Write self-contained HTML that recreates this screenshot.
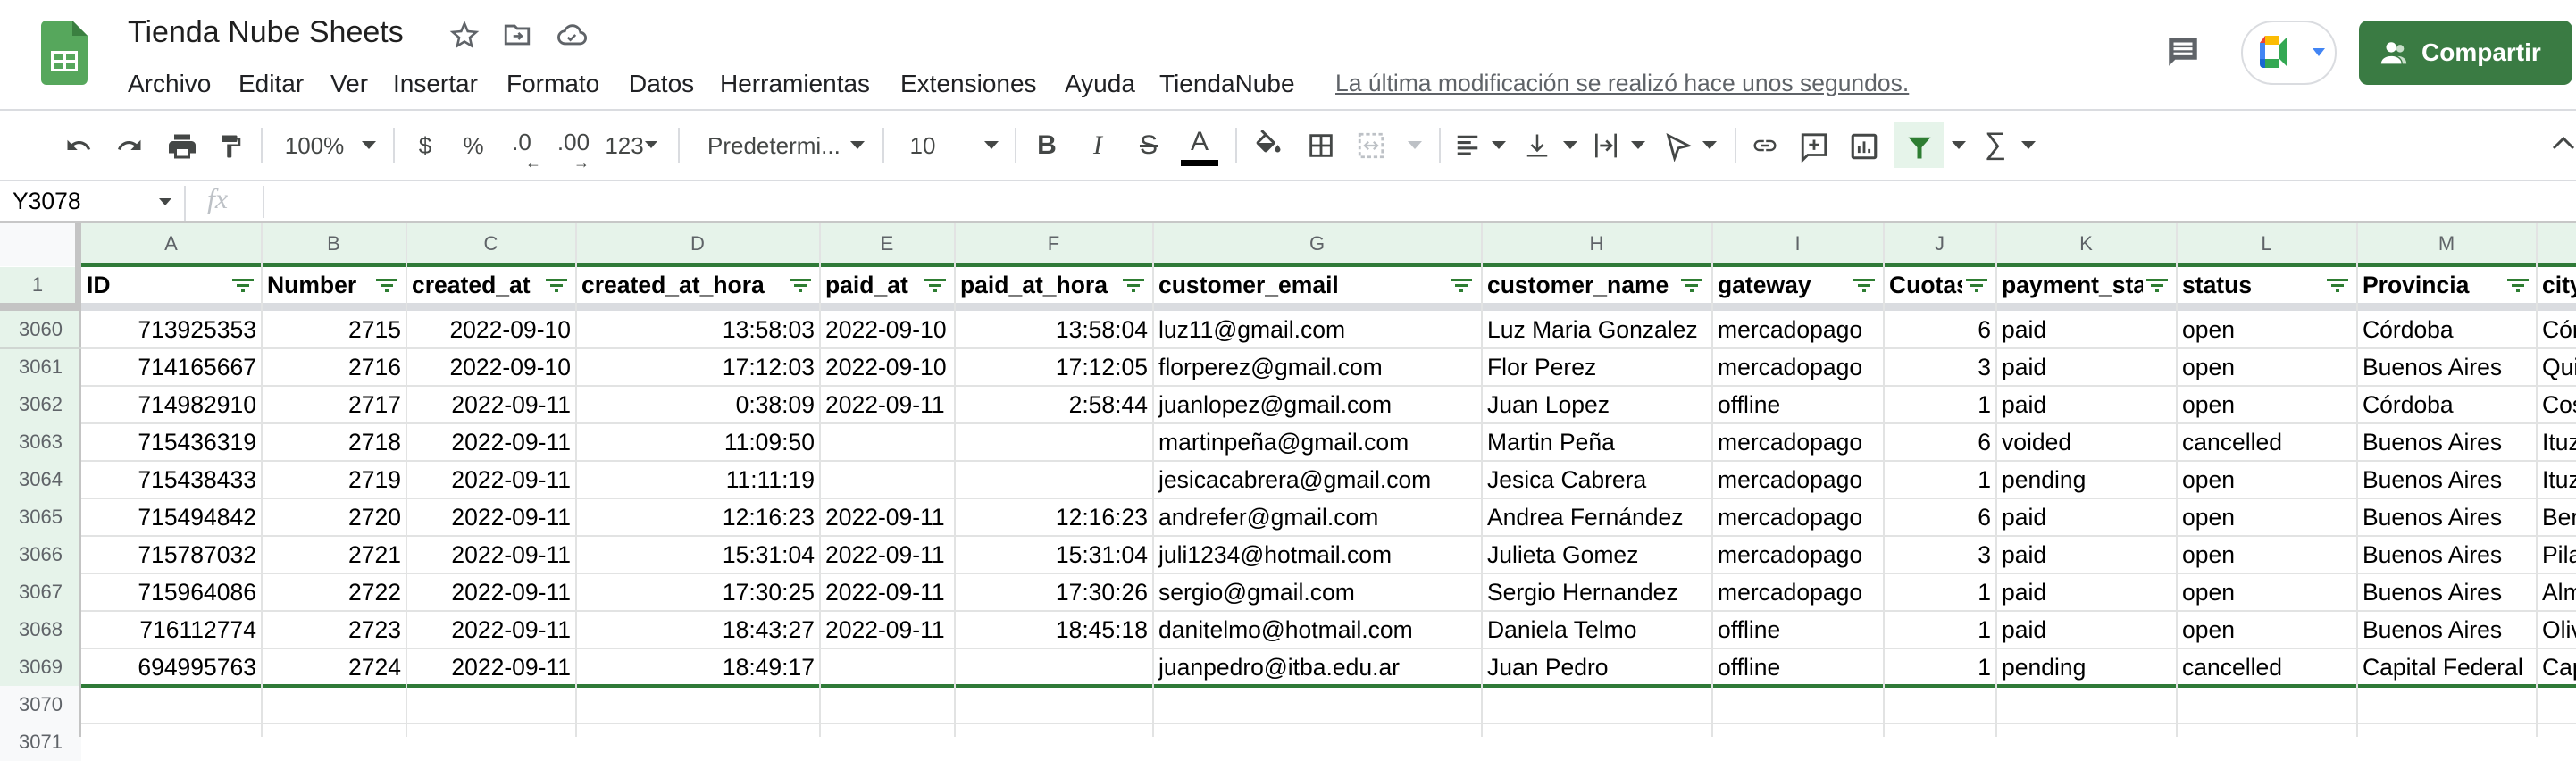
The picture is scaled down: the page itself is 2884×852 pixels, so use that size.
<!DOCTYPE html>
<html><head><meta charset="utf-8">
<style>
*{margin:0;padding:0;box-sizing:border-box}
body{width:2884px;height:825px;overflow:hidden;background:#fff;font-family:"Liberation Sans",Arial,sans-serif;position:relative;color:#000}
.a{position:absolute;white-space:nowrap}
.menu{top:78px;font-size:28px;color:#202124}
.tb{position:absolute;top:140px;height:46px;display:flex;align-items:center;justify-content:center;color:#444746;font-size:26px}
.sep{position:absolute;top:143px;width:2px;height:40px;background:#dadce0}
.cell{position:absolute;height:42px;line-height:42px;font-size:26.5px;overflow:hidden;white-space:nowrap;padding:0 6px}
.r{text-align:right}
.hd{font-weight:bold}
.rn{position:absolute;left:0;width:91px;text-align:center;font-size:22px;color:#5f6368;height:42px;line-height:42px;background:#e6f3ea}
.ch{position:absolute;top:250px;height:46px;line-height:46px;text-align:center;font-size:22px;color:#5f6368}
.vl{position:absolute;width:2px;background:#e2e3e3}
.hl{position:absolute;left:91px;width:2793px;height:2px;background:#e2e3e3}
.flt{position:absolute;width:24px;height:16px}
</style></head><body>

<svg class="a" style="left:46px;top:23px" width="52" height="72" viewBox="0 0 52 72">
<path d="M0 6a6 6 0 0 1 6-6h29l17 17v49a6 6 0 0 1-6 6H6a6 6 0 0 1-6-6z" fill="#56a75c"/>
<path d="M35 0l17 17H35z" fill="#3a7f40"/>
<rect x="11" y="34" width="30" height="22" fill="#fff"/>
<rect x="14" y="37" width="10" height="7" fill="#56a75c"/><rect x="28" y="37" width="10" height="7" fill="#56a75c"/>
<rect x="14" y="47" width="10" height="7" fill="#56a75c"/><rect x="28" y="47" width="10" height="7" fill="#56a75c"/>
</svg>
<div class="a" style="left:143px;top:17px;font-size:34px;color:#1f1f1f">Tienda Nube Sheets</div>
<svg class="a" style="left:503px;top:22px" width="34" height="34" viewBox="0 0 24 24"><path d="M12 3l2.6 6.2 6.7.6-5.1 4.4 1.5 6.6L12 17.3 6.3 20.8l1.5-6.6L2.7 9.8l6.7-.6z" fill="none" stroke="#5f6368" stroke-width="1.8"/></svg>
<svg class="a" style="left:562px;top:22px" width="34" height="34" viewBox="0 0 24 24"><path d="M3 5h7l2 2h9v12H3z" fill="none" stroke="#5f6368" stroke-width="2"/><path d="M9 13h6m-2-2.5L15.5 13 13 15.5" fill="none" stroke="#5f6368" stroke-width="1.8"/></svg>
<svg class="a" style="left:622px;top:22px" width="36" height="34" viewBox="0 0 24 24"><path d="M7 19a5 5 0 0 1-.5-10A6.5 6.5 0 0 1 19 10a4.5 4.5 0 0 1-1 9z" fill="none" stroke="#5f6368" stroke-width="2"/><path d="M9 14l2 2 4-4" fill="none" stroke="#5f6368" stroke-width="1.8"/></svg>

<div class="a menu" style="left:143px">Archivo</div>
<div class="a menu" style="left:267px">Editar</div>
<div class="a menu" style="left:370px">Ver</div>
<div class="a menu" style="left:440px">Insertar</div>
<div class="a menu" style="left:567px">Formato</div>
<div class="a menu" style="left:704px">Datos</div>
<div class="a menu" style="left:806px">Herramientas</div>
<div class="a menu" style="left:1008px">Extensiones</div>
<div class="a menu" style="left:1192px">Ayuda</div>
<div class="a menu" style="left:1298px">TiendaNube</div>
<div class="a" style="left:1495px;top:78px;font-size:26.5px;color:#5f6368;text-decoration:underline">La última modificación se realizó hace unos segundos.</div>

<svg class="a" style="left:2423px;top:36px" width="42" height="44" viewBox="0 0 24 24"><path d="M3 3h18v14H7l-4 4z" fill="#5f6368"/><rect x="6" y="6" width="12" height="1.8" fill="#fff"/><rect x="6" y="9.2" width="12" height="1.8" fill="#fff"/><rect x="6" y="12.4" width="12" height="1.8" fill="#fff"/></svg>
<div class="a" style="left:2509px;top:23px;width:107px;height:72px;border:2px solid #dadce0;border-radius:36px"></div>
<svg class="a" style="left:2528px;top:38px" width="40" height="40" viewBox="0 0 40 40">
<path d="M8 2h16v10H8z" fill="#fbbc04"/><path d="M2 10l6-8v10H2z" fill="#ea4335"/>
<path d="M2 10h6v18H2z" fill="#4285f4"/><path d="M2 28h6v10H6a4 4 0 0 1-4-4z" fill="#1967d2"/>
<path d="M8 28h16v10H8z" fill="#34a853"/><path d="M24 12v16l8 8V4z" fill="#34a853"/>
<rect x="8" y="12" width="16" height="16" fill="#fff"/></svg>
<svg class="a" style="left:2589px;top:54px" width="14" height="10" viewBox="0 0 14 10"><path d="M0 0h14L7 9z" fill="#4285f4"/></svg>
<div class="a" style="left:2641px;top:23px;width:239px;height:72px;background:#3a7b43;border-radius:10px;color:#fff;font-size:28px;line-height:72px;padding-left:70px;font-weight:bold">Compartir</div>
<svg class="a" style="left:2663px;top:43px" width="34" height="34" viewBox="0 0 24 24"><circle cx="10" cy="7" r="4" fill="#fff"/><path d="M2 20c0-4 4-6 8-6s8 2 8 6z" fill="#fff"/><circle cx="17" cy="8" r="3" fill="#c9dfcb"/><path d="M15 14c4 0 7 2 7 6h-3c0-3-2-5-4-6z" fill="#c9dfcb"/></svg>

<div class="a" style="left:0;top:122px;width:2884px;height:2px;background:#dadce0"></div>
<div class="a" style="left:0;top:201px;width:2884px;height:2px;background:#dadce0"></div>
<svg class="a" style="left:70px;top:148px" width="36" height="30" viewBox="0 0 24 24"><path d="M12.5 8c-2.6 0-5 1-6.9 2.6L2 7v9h9l-3.6-3.6c1.4-1.2 3.2-1.9 5.1-1.900 3.5 0 6.5 2.3 7.6 5.5l2.4-.8C21 11 17.1 8 12.5 8z" fill="#444746"/></svg>
<svg class="a" style="left:127px;top:148px" width="36" height="30" viewBox="0 0 24 24"><path d="M18.4 10.6C16.6 9 14.1 8 11.5 8 6.9 8 3 11 1.6 15.2l2.4.8C5 12.8 8 10.5 11.5 10.5c1.9 0 3.7.7 5.1 1.9L13 16h9V7z" fill="#444746"/></svg>
<svg class="a" style="left:186px;top:144px" width="36" height="40" viewBox="0 0 24 24"><path d="M19 8H5a3 3 0 0 0-3 3v6h4v4h12v-4h4v-6a3 3 0 0 0-3-3zm-3 11H8v-5h8zM18 3H6v4h12z" fill="#444746"/></svg>
<svg class="a" style="left:243px;top:144px" width="30" height="40" viewBox="0 0 24 24"><path d="M18 4V3a1 1 0 0 0-1-1H5a1 1 0 0 0-1 1v4a1 1 0 0 0 1 1h12a1 1 0 0 0 1-1V6h1v4H9v11a1 1 0 0 0 1 1h2a1 1 0 0 0 1-1v-9h8V4z" fill="#444746"/></svg>
<div class="sep" style="left:292px"></div>
<div class="tb" style="left:322px;width:60px">100%</div>
<svg class="a" style="left:405px;top:158px" width="16" height="10"><path d="M0 0h16L8 9z" fill="#444746"/></svg>
<div class="sep" style="left:440px"></div>
<div class="tb" style="left:466px;width:20px">$</div>
<div class="tb" style="left:518px;width:24px">%</div>
<div class="tb" style="left:572px;width:24px;top:136px">.0</div>
<div class="a" style="left:588px;top:172px;font-size:18px;color:#444746">←</div>
<div class="tb" style="left:624px;width:36px;top:136px">.00</div>
<div class="a" style="left:642px;top:172px;font-size:18px;color:#444746">→</div>
<div class="tb" style="left:678px;width:42px">123</div>
<svg class="a" style="left:722px;top:158px" width="14" height="10"><path d="M0 0h14L7 8z" fill="#444746"/></svg>
<div class="sep" style="left:759px"></div>
<div class="tb" style="left:792px;width:142px;justify-content:flex-start">Predetermi...</div>
<svg class="a" style="left:952px;top:158px" width="16" height="10"><path d="M0 0h16L8 9z" fill="#444746"/></svg>
<div class="sep" style="left:988px"></div>
<div class="tb" style="left:1018px;width:30px">10</div>
<svg class="a" style="left:1102px;top:158px" width="16" height="10"><path d="M0 0h16L8 9z" fill="#444746"/></svg>
<div class="sep" style="left:1136px"></div>
<div class="tb" style="left:1160px;width:24px;font-weight:bold;font-size:30px">B</div>
<div class="tb" style="left:1217px;width:24px;font-style:italic;font-size:30px;font-family:'Liberation Serif',serif">I</div>
<div class="tb" style="left:1273px;width:26px;text-decoration:line-through;font-size:30px">S</div>
<div class="tb" style="left:1329px;width:28px;font-size:30px;top:136px">A</div>
<div class="a" style="left:1322px;top:179px;width:42px;height:7px;background:#000"></div>
<div class="sep" style="left:1383px"></div>
<svg class="a" style="left:1402px;top:145px" width="36" height="36" viewBox="0 0 24 24"><path d="M16.6 8.9L7.6 0 6.2 1.4l2.4 2.4-5.1 5.1a1.5 1.5 0 0 0 0 2.1l5.5 5.5a1.5 1.5 0 0 0 2.1 0l5.5-5.5a1.5 1.5 0 0 0 0-2.1zM5.2 10L10 5.2 14.8 10zM19 11.5s-2 2.2-2 3.5a2 2 0 0 0 4 0c0-1.3-2-3.5-2-3.5z" fill="#444746"/></svg>
<svg class="a" style="left:1462px;top:145px" width="34" height="36" viewBox="0 0 24 24"><path d="M3 3v18h18V3zm8 16H5v-6h6zm0-8H5V5h6zm8 8h-6v-6h6zm0-8h-6V5h6z" fill="#444746"/></svg>
<svg class="a" style="left:1518px;top:145px" width="34" height="36" viewBox="0 0 24 24"><path d="M3 3h18v18H3z" fill="none" stroke="#bdc1c6" stroke-width="2" stroke-dasharray="3 2"/><path d="M8 12h8M10 9l-3 3 3 3M14 9l3 3-3 3" fill="none" stroke="#bdc1c6" stroke-width="1.6"/></svg>
<svg class="a" style="left:1576px;top:158px" width="16" height="10"><path d="M0 0h16L8 9z" fill="#bdc1c6"/></svg>
<div class="sep" style="left:1611px"></div>
<svg class="a" style="left:1628px;top:145px" width="30" height="36" viewBox="0 0 24 24"><path d="M3 3h18v2.5H3zm0 5h12v2.5H3zm0 5h18v2.5H3zm0 5h12v2.5H3z" fill="#444746"/></svg>
<svg class="a" style="left:1670px;top:158px" width="16" height="10"><path d="M0 0h16L8 9z" fill="#444746"/></svg>
<svg class="a" style="left:1706px;top:145px" width="30" height="36" viewBox="0 0 24 24"><path d="M11 2h2v12l3.5-3.5 1.4 1.4L12 17.8 6.1 11.9l1.4-1.4L11 14zM3 20h18v2H3z" fill="#444746"/></svg>
<svg class="a" style="left:1750px;top:158px" width="16" height="10"><path d="M0 0h16L8 9z" fill="#444746"/></svg>
<svg class="a" style="left:1782px;top:145px" width="32" height="36" viewBox="0 0 24 24"><path d="M3 2h2v20H3zm16 0h2v20h-2zM7 11h7l-2.5-2.5 1.4-1.4L18 12l-5.1 4.9-1.4-1.4L14 13H7z" fill="#444746"/></svg>
<svg class="a" style="left:1826px;top:158px" width="16" height="10"><path d="M0 0h16L8 9z" fill="#444746"/></svg>
<svg class="a" style="left:1862px;top:145px" width="34" height="36" viewBox="0 0 24 24"><path d="M4 4l16 8-8 2-3 8z" fill="none" stroke="#444746" stroke-width="2"/></svg>
<svg class="a" style="left:1906px;top:158px" width="16" height="10"><path d="M0 0h16L8 9z" fill="#444746"/></svg>
<div class="sep" style="left:1942px"></div>
<svg class="a" style="left:1958px;top:148px" width="36" height="30" viewBox="0 0 24 24"><path d="M3.9 12A3.1 3.1 0 0 1 7 8.9h4V7H7a5 5 0 0 0 0 10h4v-1.9H7A3.1 3.1 0 0 1 3.9 12zM8 13h8v-2H8zm9-6h-4v1.9h4a3.1 3.1 0 0 1 0 6.2h-4V17h4a5 5 0 0 0 0-10z" fill="#444746"/></svg>
<svg class="a" style="left:2014px;top:145px" width="34" height="40" viewBox="0 0 24 24"><path d="M3 2h18v16H7l-4 4z" fill="none" stroke="#444746" stroke-width="2"/><path d="M12 6v8M8 10h8" stroke="#444746" stroke-width="2"/></svg>
<svg class="a" style="left:2070px;top:145px" width="34" height="38" viewBox="0 0 24 24"><rect x="3" y="3" width="18" height="18" rx="1" fill="none" stroke="#444746" stroke-width="2.2"/><path d="M8 17v-5m4 5V8m4 9v-3" stroke="#444746" stroke-width="2"/></svg>
<div class="a" style="left:2121px;top:137px;width:55px;height:51px;background:#e6f4ea"></div>
<svg class="a" style="left:2134px;top:148px" width="30" height="34" viewBox="0 0 24 24"><path d="M2 3h20l-8 9v10h-4V12z" fill="#2e7d32"/></svg>
<svg class="a" style="left:2185px;top:158px" width="16" height="10"><path d="M0 0h16L8 9z" fill="#444746"/></svg>
<div class="tb" style="left:2222px;width:24px;font-size:34px;top:138px">∑</div>
<svg class="a" style="left:2263px;top:158px" width="16" height="10"><path d="M0 0h16L8 9z" fill="#444746"/></svg>
<svg class="a" style="left:2856px;top:150px" width="28" height="20" viewBox="0 0 28 20"><path d="M3 16L14 5l11 11" fill="none" stroke="#444746" stroke-width="3"/></svg>

<div class="a" style="left:14px;top:208px;font-size:26.5px;line-height:34px">Y3078</div>
<svg class="a" style="left:178px;top:222px" width="14" height="9"><path d="M0 0h14L7 8z" fill="#444746"/></svg>
<div class="a" style="left:206px;top:208px;width:2px;height:40px;background:#dadce0"></div>
<div class="a" style="left:232px;top:204px;font-size:32px;color:#bdc1c6;font-style:italic;font-family:'Liberation Serif',serif">fx</div>
<div class="a" style="left:294px;top:208px;width:2px;height:36px;background:#dadce0"></div>
<div class="a" style="left:0;top:247px;width:2884px;height:3px;background:#c7c7c7"></div>

<div class="a" style="left:0;top:250px;width:91px;height:48px;background:#f8f9fa"></div>
<div class="a" style="left:91px;top:250px;width:2793px;height:46px;background:#e6f3ea"></div>
<div class="a" style="left:84px;top:250px;width:7px;height:98px;background:#c4c4c4"></div>
<div class="a" style="left:0;top:339px;width:2884px;height:9px;background:#dadce0"></div>
<div class="a" style="left:0;top:339px;width:91px;height:9px;background:#c4c4c4"></div>
<div class="a" style="left:91px;top:295px;width:2793px;height:4px;background:#2f7a38"></div>

<div class="rn" style="top:299px;height:40px;line-height:40px;width:84px">1</div>
<div class="rn" style="top:348px">3060</div>
<div class="rn" style="top:390px">3061</div>
<div class="rn" style="top:432px">3062</div>
<div class="rn" style="top:474px">3063</div>
<div class="rn" style="top:516px">3064</div>
<div class="rn" style="top:558px">3065</div>
<div class="rn" style="top:600px">3066</div>
<div class="rn" style="top:642px">3067</div>
<div class="rn" style="top:684px">3068</div>
<div class="rn" style="top:726px">3069</div>
<div class="rn" style="top:768px;background:#f8f9fa">3070</div>
<div class="rn" style="top:810px;background:#f8f9fa">3071</div>
<div class="a" style="left:89px;top:348px;width:2px;height:477px;background:#c4c4c4"></div>

<div class="hl" style="top:389px"></div><div class="hl" style="top:431px"></div><div class="hl" style="top:473px"></div>
<div class="hl" style="top:515px"></div><div class="hl" style="top:557px"></div><div class="hl" style="top:599px"></div>
<div class="hl" style="top:641px"></div><div class="hl" style="top:683px"></div><div class="hl" style="top:725px"></div>
<div class="hl" style="top:809px"></div>
<div class="a" style="left:0;top:389px;width:91px;height:2px;background:#d0d6d2"></div>
<div class="a" style="left:91px;top:766px;width:2793px;height:4px;background:#2f7a38"></div>

<div class="vl" style="left:292px;top:250px;height:575px"></div>
<div class="vl" style="left:454px;top:250px;height:575px"></div>
<div class="vl" style="left:644px;top:250px;height:575px"></div>
<div class="vl" style="left:917px;top:250px;height:575px"></div>
<div class="vl" style="left:1068px;top:250px;height:575px"></div>
<div class="vl" style="left:1290px;top:250px;height:575px"></div>
<div class="vl" style="left:1658px;top:250px;height:575px"></div>
<div class="vl" style="left:1916px;top:250px;height:575px"></div>
<div class="vl" style="left:2108px;top:250px;height:575px"></div>
<div class="vl" style="left:2234px;top:250px;height:575px"></div>
<div class="vl" style="left:2436px;top:250px;height:575px"></div>
<div class="vl" style="left:2638px;top:250px;height:575px"></div>
<div class="vl" style="left:2839px;top:250px;height:575px"></div>

<div class="ch" style="left:91px;width:201px">A</div>
<div class="ch" style="left:293px;width:161px">B</div>
<div class="ch" style="left:455px;width:189px">C</div>
<div class="ch" style="left:645px;width:272px">D</div>
<div class="ch" style="left:918px;width:150px">E</div>
<div class="ch" style="left:1069px;width:221px">F</div>
<div class="ch" style="left:1291px;width:367px">G</div>
<div class="ch" style="left:1659px;width:257px">H</div>
<div class="ch" style="left:1917px;width:191px">I</div>
<div class="ch" style="left:2109px;width:125px">J</div>
<div class="ch" style="left:2235px;width:201px">K</div>
<div class="ch" style="left:2437px;width:201px">L</div>
<div class="ch" style="left:2639px;width:200px">M</div>

<div class="cell hd" style="left:91px;top:299px;width:170px;height:40px;line-height:40px">ID</div>
<div class="cell hd" style="left:293px;top:299px;width:130px;height:40px;line-height:40px">Number</div>
<div class="cell hd" style="left:455px;top:299px;width:160px;height:40px;line-height:40px">created_at</div>
<div class="cell hd" style="left:645px;top:299px;width:240px;height:40px;line-height:40px">created_at_hora</div>
<div class="cell hd" style="left:918px;top:299px;width:120px;height:40px;line-height:40px">paid_at</div>
<div class="cell hd" style="left:1069px;top:299px;width:190px;height:40px;line-height:40px">paid_at_hora</div>
<div class="cell hd" style="left:1291px;top:299px;width:330px;height:40px;line-height:40px">customer_email</div>
<div class="cell hd" style="left:1659px;top:299px;width:225px;height:40px;line-height:40px">customer_name</div>
<div class="cell hd" style="left:1917px;top:299px;width:160px;height:40px;line-height:40px">gateway</div>
<div class="cell hd" style="left:2109px;top:299px;width:88px;height:40px;line-height:40px">Cuotas</div>
<div class="cell hd" style="left:2235px;top:299px;width:164px;height:40px;line-height:40px">payment_status</div>
<div class="cell hd" style="left:2437px;top:299px;width:170px;height:40px;line-height:40px">status</div>
<div class="cell hd" style="left:2639px;top:299px;width:170px;height:40px;line-height:40px">Provincia</div>
<div class="cell hd" style="left:2840px;top:299px;width:60px;height:40px;line-height:40px">city</div>

<svg width="0" height="0" style="position:absolute"><defs><g id="f"><rect x="0" y="0" width="24" height="3" fill="#2e7d32"/><rect x="5" y="6" width="14" height="3" fill="#2e7d32"/><rect x="10" y="12" width="4" height="3" fill="#2e7d32"/></g></defs></svg>
<svg class="flt" style="left:260px;top:312px"><use href="#f"/></svg>
<svg class="flt" style="left:421px;top:312px"><use href="#f"/></svg>
<svg class="flt" style="left:611px;top:312px"><use href="#f"/></svg>
<svg class="flt" style="left:884px;top:312px"><use href="#f"/></svg>
<svg class="flt" style="left:1035px;top:312px"><use href="#f"/></svg>
<svg class="flt" style="left:1257px;top:312px"><use href="#f"/></svg>
<svg class="flt" style="left:1624px;top:312px"><use href="#f"/></svg>
<svg class="flt" style="left:1882px;top:312px"><use href="#f"/></svg>
<svg class="flt" style="left:2075px;top:312px"><use href="#f"/></svg>
<svg class="flt" style="left:2201px;top:312px"><use href="#f"/></svg>
<svg class="flt" style="left:2403px;top:312px"><use href="#f"/></svg>
<svg class="flt" style="left:2605px;top:312px"><use href="#f"/></svg>
<svg class="flt" style="left:2807px;top:312px"><use href="#f"/></svg>

<div class="cell r" style="left:91px;top:348px;width:202px">713925353</div><div class="cell r" style="left:293px;top:348px;width:162px">2715</div><div class="cell r" style="left:455px;top:348px;width:190px">2022-09-10</div><div class="cell r" style="left:645px;top:348px;width:273px">13:58:03</div><div class="cell" style="left:918px;top:348px;width:151px">2022-09-10</div><div class="cell r" style="left:1069px;top:348px;width:222px">13:58:04</div><div class="cell" style="left:1291px;top:348px;width:368px">luz11@gmail.com</div><div class="cell" style="left:1659px;top:348px;width:258px">Luz Maria Gonzalez</div><div class="cell" style="left:1917px;top:348px;width:192px">mercadopago</div><div class="cell r" style="left:2109px;top:348px;width:126px">6</div><div class="cell" style="left:2235px;top:348px;width:202px">paid</div><div class="cell" style="left:2437px;top:348px;width:202px">open</div><div class="cell" style="left:2639px;top:348px;width:201px">Córdoba</div><div class="cell" style="left:2840px;top:348px;width:60px">Córdoba</div>
<div class="cell r" style="left:91px;top:390px;width:202px">714165667</div><div class="cell r" style="left:293px;top:390px;width:162px">2716</div><div class="cell r" style="left:455px;top:390px;width:190px">2022-09-10</div><div class="cell r" style="left:645px;top:390px;width:273px">17:12:03</div><div class="cell" style="left:918px;top:390px;width:151px">2022-09-10</div><div class="cell r" style="left:1069px;top:390px;width:222px">17:12:05</div><div class="cell" style="left:1291px;top:390px;width:368px">florperez@gmail.com</div><div class="cell" style="left:1659px;top:390px;width:258px">Flor Perez</div><div class="cell" style="left:1917px;top:390px;width:192px">mercadopago</div><div class="cell r" style="left:2109px;top:390px;width:126px">3</div><div class="cell" style="left:2235px;top:390px;width:202px">paid</div><div class="cell" style="left:2437px;top:390px;width:202px">open</div><div class="cell" style="left:2639px;top:390px;width:201px">Buenos Aires</div><div class="cell" style="left:2840px;top:390px;width:60px">Quilmes</div>
<div class="cell r" style="left:91px;top:432px;width:202px">714982910</div><div class="cell r" style="left:293px;top:432px;width:162px">2717</div><div class="cell r" style="left:455px;top:432px;width:190px">2022-09-11</div><div class="cell r" style="left:645px;top:432px;width:273px">0:38:09</div><div class="cell" style="left:918px;top:432px;width:151px">2022-09-11</div><div class="cell r" style="left:1069px;top:432px;width:222px">2:58:44</div><div class="cell" style="left:1291px;top:432px;width:368px">juanlopez@gmail.com</div><div class="cell" style="left:1659px;top:432px;width:258px">Juan Lopez</div><div class="cell" style="left:1917px;top:432px;width:192px">offline</div><div class="cell r" style="left:2109px;top:432px;width:126px">1</div><div class="cell" style="left:2235px;top:432px;width:202px">paid</div><div class="cell" style="left:2437px;top:432px;width:202px">open</div><div class="cell" style="left:2639px;top:432px;width:201px">Córdoba</div><div class="cell" style="left:2840px;top:432px;width:60px">Cosquín</div>
<div class="cell r" style="left:91px;top:474px;width:202px">715436319</div><div class="cell r" style="left:293px;top:474px;width:162px">2718</div><div class="cell r" style="left:455px;top:474px;width:190px">2022-09-11</div><div class="cell r" style="left:645px;top:474px;width:273px">11:09:50</div><div class="cell" style="left:1291px;top:474px;width:368px">martinpeña@gmail.com</div><div class="cell" style="left:1659px;top:474px;width:258px">Martin Peña</div><div class="cell" style="left:1917px;top:474px;width:192px">mercadopago</div><div class="cell r" style="left:2109px;top:474px;width:126px">6</div><div class="cell" style="left:2235px;top:474px;width:202px">voided</div><div class="cell" style="left:2437px;top:474px;width:202px">cancelled</div><div class="cell" style="left:2639px;top:474px;width:201px">Buenos Aires</div><div class="cell" style="left:2840px;top:474px;width:60px">Ituzaingó</div>
<div class="cell r" style="left:91px;top:516px;width:202px">715438433</div><div class="cell r" style="left:293px;top:516px;width:162px">2719</div><div class="cell r" style="left:455px;top:516px;width:190px">2022-09-11</div><div class="cell r" style="left:645px;top:516px;width:273px">11:11:19</div><div class="cell" style="left:1291px;top:516px;width:368px">jesicacabrera@gmail.com</div><div class="cell" style="left:1659px;top:516px;width:258px">Jesica Cabrera</div><div class="cell" style="left:1917px;top:516px;width:192px">mercadopago</div><div class="cell r" style="left:2109px;top:516px;width:126px">1</div><div class="cell" style="left:2235px;top:516px;width:202px">pending</div><div class="cell" style="left:2437px;top:516px;width:202px">open</div><div class="cell" style="left:2639px;top:516px;width:201px">Buenos Aires</div><div class="cell" style="left:2840px;top:516px;width:60px">Ituzaingó</div>
<div class="cell r" style="left:91px;top:558px;width:202px">715494842</div><div class="cell r" style="left:293px;top:558px;width:162px">2720</div><div class="cell r" style="left:455px;top:558px;width:190px">2022-09-11</div><div class="cell r" style="left:645px;top:558px;width:273px">12:16:23</div><div class="cell" style="left:918px;top:558px;width:151px">2022-09-11</div><div class="cell r" style="left:1069px;top:558px;width:222px">12:16:23</div><div class="cell" style="left:1291px;top:558px;width:368px">andrefer@gmail.com</div><div class="cell" style="left:1659px;top:558px;width:258px">Andrea Fernández</div><div class="cell" style="left:1917px;top:558px;width:192px">mercadopago</div><div class="cell r" style="left:2109px;top:558px;width:126px">6</div><div class="cell" style="left:2235px;top:558px;width:202px">paid</div><div class="cell" style="left:2437px;top:558px;width:202px">open</div><div class="cell" style="left:2639px;top:558px;width:201px">Buenos Aires</div><div class="cell" style="left:2840px;top:558px;width:60px">Berazategui</div>
<div class="cell r" style="left:91px;top:600px;width:202px">715787032</div><div class="cell r" style="left:293px;top:600px;width:162px">2721</div><div class="cell r" style="left:455px;top:600px;width:190px">2022-09-11</div><div class="cell r" style="left:645px;top:600px;width:273px">15:31:04</div><div class="cell" style="left:918px;top:600px;width:151px">2022-09-11</div><div class="cell r" style="left:1069px;top:600px;width:222px">15:31:04</div><div class="cell" style="left:1291px;top:600px;width:368px">juli1234@hotmail.com</div><div class="cell" style="left:1659px;top:600px;width:258px">Julieta Gomez</div><div class="cell" style="left:1917px;top:600px;width:192px">mercadopago</div><div class="cell r" style="left:2109px;top:600px;width:126px">3</div><div class="cell" style="left:2235px;top:600px;width:202px">paid</div><div class="cell" style="left:2437px;top:600px;width:202px">open</div><div class="cell" style="left:2639px;top:600px;width:201px">Buenos Aires</div><div class="cell" style="left:2840px;top:600px;width:60px">Pilar</div>
<div class="cell r" style="left:91px;top:642px;width:202px">715964086</div><div class="cell r" style="left:293px;top:642px;width:162px">2722</div><div class="cell r" style="left:455px;top:642px;width:190px">2022-09-11</div><div class="cell r" style="left:645px;top:642px;width:273px">17:30:25</div><div class="cell" style="left:918px;top:642px;width:151px">2022-09-11</div><div class="cell r" style="left:1069px;top:642px;width:222px">17:30:26</div><div class="cell" style="left:1291px;top:642px;width:368px">sergio@gmail.com</div><div class="cell" style="left:1659px;top:642px;width:258px">Sergio Hernandez</div><div class="cell" style="left:1917px;top:642px;width:192px">mercadopago</div><div class="cell r" style="left:2109px;top:642px;width:126px">1</div><div class="cell" style="left:2235px;top:642px;width:202px">paid</div><div class="cell" style="left:2437px;top:642px;width:202px">open</div><div class="cell" style="left:2639px;top:642px;width:201px">Buenos Aires</div><div class="cell" style="left:2840px;top:642px;width:60px">Almirante</div>
<div class="cell r" style="left:91px;top:684px;width:202px">716112774</div><div class="cell r" style="left:293px;top:684px;width:162px">2723</div><div class="cell r" style="left:455px;top:684px;width:190px">2022-09-11</div><div class="cell r" style="left:645px;top:684px;width:273px">18:43:27</div><div class="cell" style="left:918px;top:684px;width:151px">2022-09-11</div><div class="cell r" style="left:1069px;top:684px;width:222px">18:45:18</div><div class="cell" style="left:1291px;top:684px;width:368px">danitelmo@hotmail.com</div><div class="cell" style="left:1659px;top:684px;width:258px">Daniela Telmo</div><div class="cell" style="left:1917px;top:684px;width:192px">offline</div><div class="cell r" style="left:2109px;top:684px;width:126px">1</div><div class="cell" style="left:2235px;top:684px;width:202px">paid</div><div class="cell" style="left:2437px;top:684px;width:202px">open</div><div class="cell" style="left:2639px;top:684px;width:201px">Buenos Aires</div><div class="cell" style="left:2840px;top:684px;width:60px">Olivos</div>
<div class="cell r" style="left:91px;top:726px;width:202px">694995763</div><div class="cell r" style="left:293px;top:726px;width:162px">2724</div><div class="cell r" style="left:455px;top:726px;width:190px">2022-09-11</div><div class="cell r" style="left:645px;top:726px;width:273px">18:49:17</div><div class="cell" style="left:1291px;top:726px;width:368px">juanpedro@itba.edu.ar</div><div class="cell" style="left:1659px;top:726px;width:258px">Juan Pedro</div><div class="cell" style="left:1917px;top:726px;width:192px">offline</div><div class="cell r" style="left:2109px;top:726px;width:126px">1</div><div class="cell" style="left:2235px;top:726px;width:202px">pending</div><div class="cell" style="left:2437px;top:726px;width:202px">cancelled</div><div class="cell" style="left:2639px;top:726px;width:201px">Capital Federal</div><div class="cell" style="left:2840px;top:726px;width:60px">Capital</div>
</body></html>
